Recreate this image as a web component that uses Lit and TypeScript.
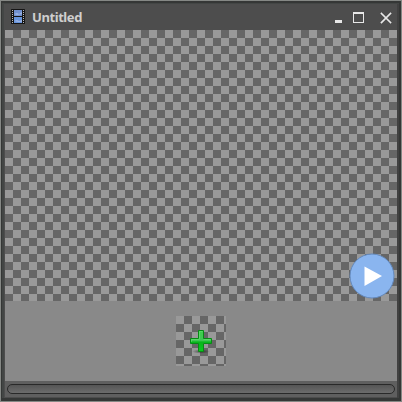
import { LitElement, html, css } from "lit";
import { customElement } from "lit/decorators.js";

@customElement("app-root")
export class AppRoot extends LitElement {
  static styles = css`
    :host { display: block; width: 402px; height: 402px; background: #858885; }
    * { box-sizing: border-box; }
    .edge { height: 402px; padding: 1px; }
    .window {
      position: relative; height: 400px; padding: 0 1px 0 3px;
      border: 2px solid #353736; border-left-width: 1px; border-bottom-width: 3px;
      background: #4d4d4d; display: flex; flex-direction: column;
      box-shadow: inset 2px 1px #434645, inset -2px 0 #414141;
    }
    .bar { height: 27px; display: flex; align-items: center; padding: 0 4px 0 6px; }
    .film { width: 14px; height: 15px; }
    .title {
      flex: 1; margin: 2px 0 0 7px; color: #cfcfcf;
      font: bold 13px/17px "Noto Sans", sans-serif;
      letter-spacing: -0.42px;
    }
    .controls { width: 60px; height: 14px; margin-top: 3px; }
    .checker {
      background: repeating-conic-gradient(#666 0 25%, #999 0 50%) 0 0 / 16px 16px;
    }
    .canvas { width: 392px; height: 271px; }
    .frames {
      width: 392px; height: 80px; display: flex; align-items: flex-start;
      padding: 15px 0 0 171px; background: #898989;
    }
    .frame { width: 50px; height: 50px; }
    .plus { display: block; width: 50px; height: 50px; }
    .track { width: 392px; height: 16px; padding: 3px 2px 0; background: #5f5f5f; }
    .thumb {
      height: 10px; border: 1px solid #292929; border-radius: 5px;
      background: linear-gradient(#555, #6c6c6c);
    }
    .play { position: absolute; left: 347px; top: 250px; width: 46px; height: 46px; }
  `;

  render() {
    return html`
      <div class="edge"><div class="window">
        <div class="bar">
          <svg class="film" viewBox="0 0 14 15">
            <rect width="14" height="15" rx=".5" fill="#151515" />
            <rect x="3" y="1" width="8" height="6" fill="#7090cf" />
            <rect x="3" y="8" width="8" height="6" fill="#6694dc" />
            <path d="M3 5l3-1 2 1 3-2v2l-5 1-3-1zM3 12l3-1 2 1 3-1v2H7l-4-1z" fill="#9bb4e4" />
            <path d="M1.5 1v13M12.5 1v13" stroke="#b9b9b9" stroke-dasharray="1 1" />
          </svg>
          <div class="title">Untitled</div>
          <svg class="controls" viewBox="0 0 60 14">
            <rect x="1" y="9" width="7" height="3" fill="#e8e8e8" />
            <path d="M19 1h11v11H19zM20 3v8h9V3z" fill="#e8e8e8" fill-rule="evenodd" />
            <path d="M47.5 2.5l9 9M56.5 2.5l-9 9" stroke="#e8e8e8" stroke-width="1.7" stroke-linecap="square" />
          </svg>
        </div>
        <div class="canvas checker"></div>
        <div class="frames">
          <div class="frame checker">
            <svg class="plus" viewBox="0 0 50 50">
              <defs>
                <linearGradient id="green" x2="0" y2="1">
                  <stop stop-color="#3fcf4c" /><stop offset=".48" stop-color="#3fc653" />
                  <stop offset=".55" stop-color="#08b51b" /><stop offset="1" stop-color="#0bca1e" />
                </linearGradient>
                <radialGradient id="shade"><stop stop-opacity=".5" /><stop offset="1" stop-opacity="0" /></radialGradient>
              </defs>
              <ellipse cx="25" cy="35.5" rx="9" ry="2.2" fill="url(#shade)" />
              <path d="M22.5 14.5h5v8h8v5h-8v8h-5v-8h-8v-5h8z" fill="url(#green)" stroke="#078a14" />
              <path d="M23.5 22.9v-7.4h3M15.5 26v-2.5h8M27.5 23.5h7" fill="none" stroke="#80ee88" stroke-opacity=".4" />
            </svg>
          </div>
        </div>
        <div class="track"><div class="thumb"></div></div>
        <svg class="play" viewBox="0 0 46 46">
          <circle cx="23" cy="23" r="22" fill="#8ab5ef" stroke="#6389bd" />
          <path d="M15.5 13.5L33 23 15.5 33z" fill="#fff" />
        </svg>
      </div></div>`;
  }
}
